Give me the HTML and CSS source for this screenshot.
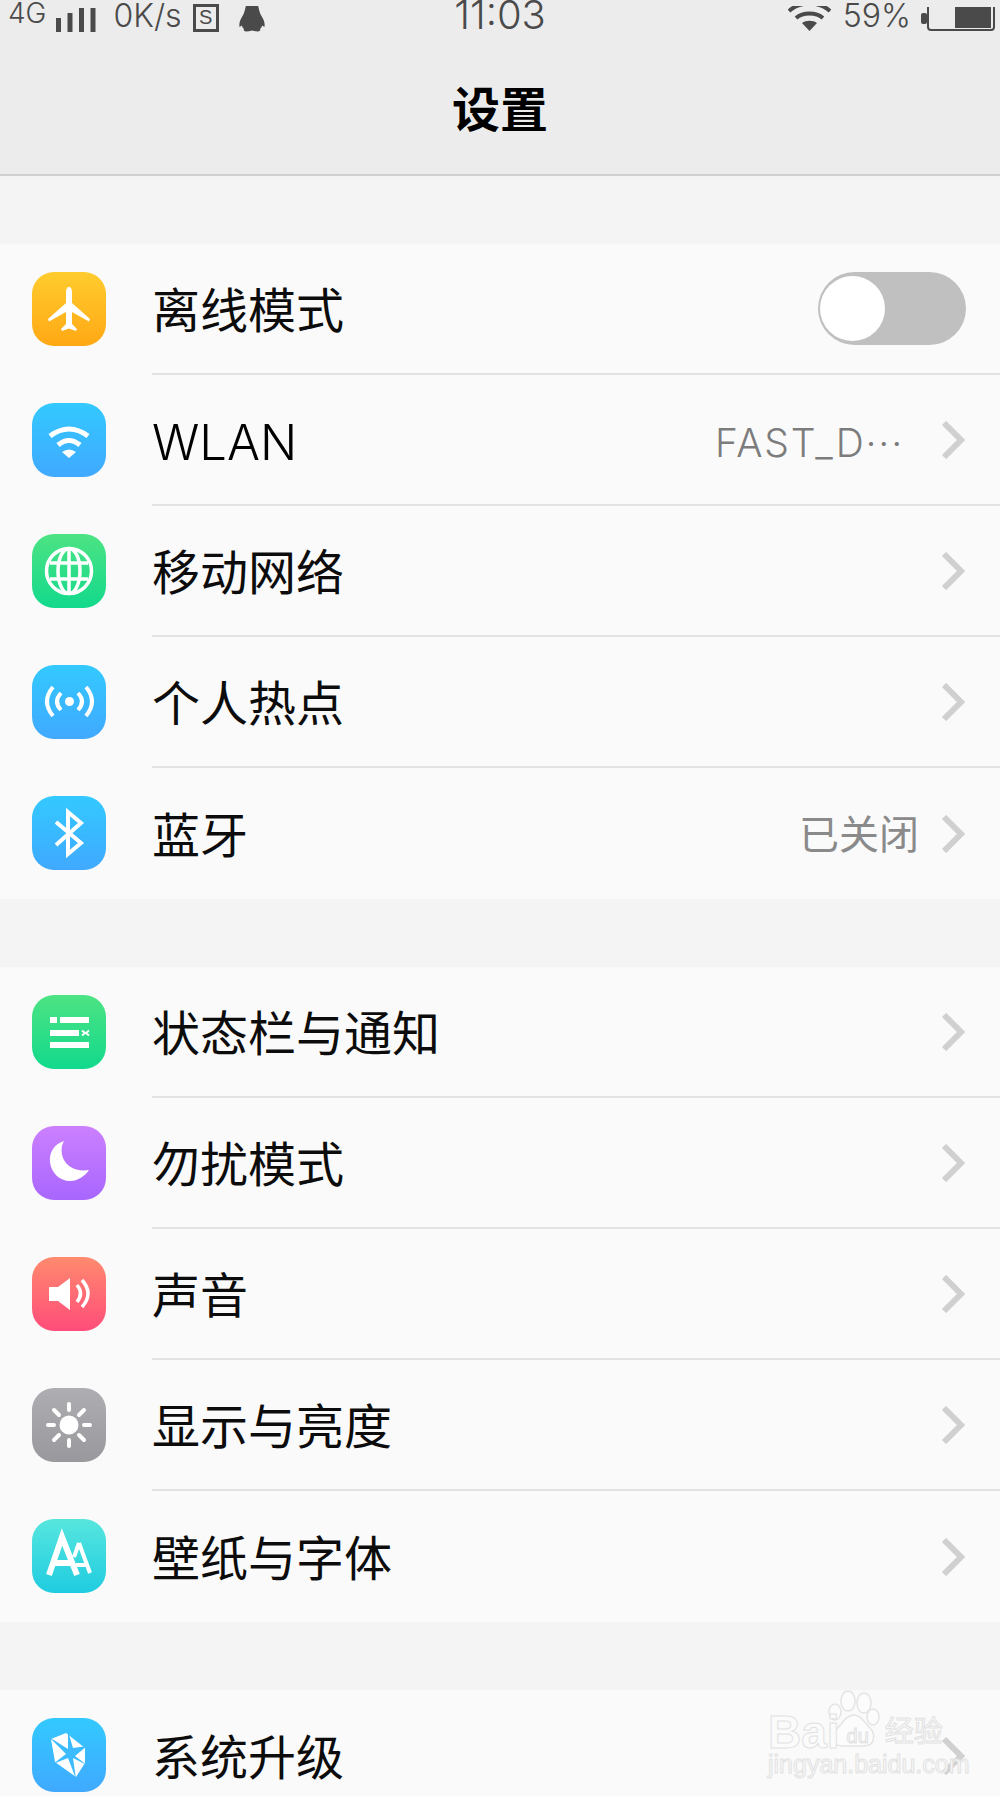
FILE: index.html
```html
<!DOCTYPE html>
<html>

<head>
    <title>设置</title>
    <link rel="stylesheet" href="styles.css">
</head>

<body>

    <div class="header">
        <div class="status">
            <div class="status-left">
                <span class="net">4G</span>
                <svg class="signal" width="40" height="24" viewBox="0 0 40 24">
                    <rect x="0" y="10" width="5" height="14" />
                    <rect x="11.500" y="5" width="5" height="19" />
                    <rect x="23" y="0" width="5" height="24" />
                    <rect x="34.500" y="0" width="5" height="24" />
                </svg>
                <span class="speed">0K/s</span>
                <span class="sim">S</span>
                <svg class="penguin" width="26" height="26" viewBox="0 0 26 26">
                    <path d="M7 -1H19C20 4 21 8 22.500 10C25 14 26 17 25.500 21L23 19.500C23 21 22 22 21 23C22 24 21 25.500 19 25.500C17 25.500 15 25 13 24.500C11 25 9 25.500 7 25.500C5 25.500 4 24 5 23C4 22 3 21 3 19.500L0.500 21C0 17 1 14 3.500 10C5 8 6 4 7 -1Z" />
                </svg>
            </div>
            <div class="time">11:03</div>
            <div class="status-right">
                <svg class="wifi-small" width="43" height="26" viewBox="0 0 43 26">
                    <path d="M1 5C12 -5 31 -5 42 5M8 12C15 6 28 6 35 12" fill="none" stroke="#4a4a4a" stroke-width="4" />
                    <path d="M14 17C18 14 25 14 29 17L21.500 25Z" />
                </svg>
                <span class="percent">59%</span>
                <svg class="battery" width="74" height="25" viewBox="0 0 74 25">
                    <rect x="0" y="6" width="6" height="11" rx="2" />
                    <rect x="7" y="-4" width="66" height="27" rx="3" fill="none" stroke="#4a4a4a" stroke-width="2" />
                    <rect x="34" y="0" width="36" height="21" />
                </svg>
            </div>
        </div>
        <div class="title">设置</div>
    </div>

    <div class="group">
        <div class="row">
            <div class="icon orange">
                <svg width="74" height="74" viewBox="0 0 74 74">
                    <path fill="#fff" d="M37 15C39 15 40 17 40 20V31L58 47L57 49.500L40 40V52L45 57L44 59L37 56.500L30 59L29 57L34 52V40L17 49.500L16 47L34 31V20C34 17 35 15 37 15Z" />
                </svg>
            </div>
            <div class="row-body">
                <span class="name">离线模式</span>
                <div class="toggle"><div class="knob"></div></div>
            </div>
        </div>
        <div class="row">
            <div class="icon blue">
                <svg width="74" height="74" viewBox="0 0 74 74">
                    <path fill="none" stroke="#fff" stroke-width="5" stroke-linejoin="round" d="M18 33Q37 19 56 33M26 42Q37 33 48 42" />
                    <path fill="#fff" d="M30 49Q37 44 44 49L37 55Z" />
                </svg>
            </div>
            <div class="row-body">
                <span class="name name-latin">WLAN</span>
                <span class="value wifi-value">FAST_D···</span>
                <svg class="arrow" width="24" height="38" viewBox="0 0 24 38"><path d="M3 2L20 19L3 36" /></svg>
            </div>
        </div>
        <div class="row">
            <div class="icon green">
                <svg width="74" height="74" viewBox="0 0 74 74" fill="none" stroke="#fff" stroke-width="3.500">
                    <circle cx="37" cy="37" r="22.500" />
                    <ellipse cx="37" cy="37" rx="11" ry="22.500" />
                    <path d="M37 15V59M18 29H56M18 45H56" />
                </svg>
            </div>
            <div class="row-body">
                <span class="name">移动网络</span>
                <svg class="arrow" width="24" height="38" viewBox="0 0 24 38"><path d="M3 2L20 19L3 36" /></svg>
            </div>
        </div>
        <div class="row">
            <div class="icon blue">
                <svg width="74" height="74" viewBox="0 0 74 74" fill="none" stroke="#fff" stroke-width="4">
                    <circle cx="37.500" cy="36.500" r="4.500" fill="#fff" stroke="none" />
                    <path d="M29 28Q21 36.500 29 45M46 28Q54 36.500 46 45M21 22Q9 36.500 21 51M54 22Q66 36.500 54 51" />
                </svg>
            </div>
            <div class="row-body">
                <span class="name">个人热点</span>
                <svg class="arrow" width="24" height="38" viewBox="0 0 24 38"><path d="M3 2L20 19L3 36" /></svg>
            </div>
        </div>
        <div class="row last">
            <div class="icon blue">
                <svg width="74" height="74" viewBox="0 0 74 74">
                    <path fill="none" stroke="#fff" stroke-width="4" d="M24 26L49 47L36 58V16L49 27L24 49" />
                </svg>
            </div>
            <div class="row-body">
                <span class="name">蓝牙</span>
                <span class="value">已关闭</span>
                <svg class="arrow" width="24" height="38" viewBox="0 0 24 38"><path d="M3 2L20 19L3 36" /></svg>
            </div>
        </div>
    </div>

    <div class="group">
        <div class="row">
            <div class="icon green">
                <svg width="74" height="74" viewBox="0 0 74 74" fill="#fff">
                    <rect x="18" y="22" width="7" height="6" />
                    <rect x="28" y="22" width="29" height="6" />
                    <rect x="18" y="35" width="29" height="6" />
                    <path d="M50 35.500L53 38L50 40.500M57 35.500L54 38L57 40.500" fill="none" stroke="#fff" stroke-width="2" />
                    <rect x="18" y="47" width="39" height="6" />
                </svg>
            </div>
            <div class="row-body">
                <span class="name">状态栏与通知</span>
                <svg class="arrow" width="24" height="38" viewBox="0 0 24 38"><path d="M3 2L20 19L3 36" /></svg>
            </div>
        </div>
        <div class="row">
            <div class="icon purple">
                <svg width="74" height="74" viewBox="0 0 74 74">
                    <path fill="#fff" d="M32 15C22 18 17 27 18 36C19 47 28 55 38 55C46 55 53 50 57 44C44 46 35 41 31 32C29 26 29 20 32 15Z" />
                </svg>
            </div>
            <div class="row-body">
                <span class="name">勿扰模式</span>
                <svg class="arrow" width="24" height="38" viewBox="0 0 24 38"><path d="M3 2L20 19L3 36" /></svg>
            </div>
        </div>
        <div class="row">
            <div class="icon red">
                <svg width="74" height="74" viewBox="0 0 74 74">
                    <path fill="#fff" d="M17 30H26L38 21V53L26 44H17Z" />
                    <path fill="none" stroke="#fff" stroke-width="3.500" d="M45 28Q52 36.500 45 45M50 23Q62 36.500 50 50" />
                </svg>
            </div>
            <div class="row-body">
                <span class="name">声音</span>
                <svg class="arrow" width="24" height="38" viewBox="0 0 24 38"><path d="M3 2L20 19L3 36" /></svg>
            </div>
        </div>
        <div class="row">
            <div class="icon gray">
                <svg width="74" height="74" viewBox="0 0 74 74" stroke="#fff" stroke-width="4" stroke-linecap="round">
                    <circle cx="37" cy="37" r="9.500" fill="#fff" stroke="none" />
                    <path d="M37 16V22M37 52V58M16 37H22M52 37H58M22 22L27 27M52 22L47 27M22 52L27 47M52 52L47 47" />
                </svg>
            </div>
            <div class="row-body">
                <span class="name">显示与亮度</span>
                <svg class="arrow" width="24" height="38" viewBox="0 0 24 38"><path d="M3 2L20 19L3 36" /></svg>
            </div>
        </div>
        <div class="row last">
            <div class="icon teal">
                <svg width="74" height="74" viewBox="0 0 74 74" fill="none" stroke="#fff">
                    <path stroke-width="4" d="M47 24L58 54M47 24L42 38M44 46H54" />
                    <path stroke-width="6" d="M17 56L30 18L45 56M22 44H40" />
                </svg>
            </div>
            <div class="row-body">
                <span class="name">壁纸与字体</span>
                <svg class="arrow" width="24" height="38" viewBox="0 0 24 38"><path d="M3 2L20 19L3 36" /></svg>
            </div>
        </div>
    </div>

    <div class="group">
        <div class="row last">
            <div class="icon blue">
                <svg width="74" height="74" viewBox="0 0 74 74">
                    <path fill="#fff" d="M19 21L34 15L53 30L53 45L44 59L23 44Z" />
                    <path fill="#3cbcff" d="M17 19L36 31L36 13L41 30L55 28L43 38L55 47L41 40L44 61L36 40L21 46L34 36Z" />
                </svg>
            </div>
            <div class="row-body">
                <span class="name">系统升级</span>
                <svg class="arrow" width="24" height="38" viewBox="0 0 24 38"><path d="M3 2L20 19L3 36" /></svg>
            </div>
        </div>
    </div>

    <div class="watermark">
        <svg class="paw" width="52" height="62" viewBox="0 0 52 62">
            <ellipse cx="20" cy="13" rx="7" ry="10" />
            <ellipse cx="36" cy="15" rx="7" ry="10" />
            <ellipse cx="7" cy="24" rx="6" ry="8" />
            <ellipse cx="45" cy="29" rx="6" ry="8" />
            <path d="M26 27C33 27 36 34 42 40C48 46 47 58 36 58C30 58 22 58 15 58C5 58 2 50 8 42C14 36 18 27 26 27Z" />
        </svg>
        <div class="mark-top">
            <span class="mark-bai">Bai</span>
            <span class="mark-du">du</span>
            <span class="mark-cn">经验</span>
        </div>
        <div class="mark-url">jingyan.baidu.com</div>
    </div>

</body>

</html>
```

FILE: styles.css
```css
html,
body {
    margin: 0;
    height: 1796px;
    overflow: hidden;
}

body {
    position: relative;
    background-color: #f4f4f4;
    font-family: Inter, "Noto Sans CJK SC", sans-serif;
}

/* top bar */

.header {
    background-color: #ececec;
    border-bottom: 2px solid #cfcfcf;
    height: 174px;
}

.status {
    display: grid;
    grid-template-columns: 1fr auto 1fr;
    align-items: end;
    height: 25px;
    color: #4a4a4a;
    fill: #4a4a4a;
}

.status-left,
.status-right {
    display: flex;
    align-items: flex-end;
    height: 25px;
}

.status-left {
    padding-left: 8px;
}

.status-right {
    justify-content: flex-end;
    padding-right: 5px;
}

.net,
.speed,
.percent {
    height: 30px;
    line-height: 30px;
    font-weight: 300;
    white-space: nowrap;
}

.net {
    font-size: 28px;
    margin-bottom: 4px;
}

.speed,
.percent {
    font-size: 32px;
    margin-bottom: 1px;
}

.signal {
    margin-left: 10px;
}

.speed {
    margin-left: 17px;
}

.sim {
    box-sizing: border-box;
    width: 26px;
    height: 28px;
    margin-left: 11px;
    border: 3px solid #4a4a4a;
    font-size: 20px;
    line-height: 20px;
    text-align: center;
    font-family: "Liberation Sans", sans-serif;
}

.penguin {
    margin-left: 20px;
}

.time {
    font-size: 40px;
    line-height: 30px;
    height: 30px;
    margin-bottom: 2px;
    font-weight: 300;
}

.percent {
    margin-left: 12px;
}

.battery {
    margin-left: 10px;
}

.title {
    height: 149px;
    padding-top: 20px;
    box-sizing: border-box;
    font-size: 48px;
    line-height: 129px;
    font-weight: 700;
    text-align: center;
    color: #000;
}

/* settings list */

.group {
    margin-top: 68px;
    background-color: #fafafa;
}

.row {
    display: flex;
    align-items: center;
    height: 131px;
}

.icon {
    flex: none;
    width: 74px;
    height: 74px;
    margin: 0 46px 2px 32px;
    border-radius: 22px;
}

.icon svg {
    display: block;
}

.orange {
    background: linear-gradient(#ffcc2e, #ffa814);
}

.blue {
    background: linear-gradient(#33c9ff, #40a9ff);
}

.green {
    background: linear-gradient(#4de383, #12d98c);
}

.purple {
    background: linear-gradient(#cc80ff, #a866ff);
}

.red {
    background: linear-gradient(#ff8a6e, #ff4d7a);
}

.gray {
    background: linear-gradient(#aeaeb2, #98989d);
}

.teal {
    background: linear-gradient(#57e6de, #1fcce0);
}

.row-body {
    flex: 1;
    display: flex;
    align-items: center;
    align-self: stretch;
    padding-right: 35px;
    border-bottom: 2px solid #e2e2e2;
}

.row.last .row-body {
    border-bottom: none;
}

.name {
    margin-right: auto;
    padding-bottom: 4px;
    font-size: 48px;
    color: #0c0c0c;
}

.name-latin {
    padding-bottom: 0;
    padding-top: 6px;
    font-size: 49px;
    font-weight: 300;
    color: #000;
}

.value {
    padding-bottom: 4px;
    font-size: 40px;
    color: #8a8a8a;
}

.wifi-value {
    margin-right: 15px;
    padding-bottom: 0;
    padding-top: 6px;
    font-size: 39px;
    font-weight: 300;
    letter-spacing: 1.800px;
    color: #7c7c7c;
}

.arrow {
    margin-left: 22px;
    fill: none;
    stroke: #d0d0d0;
    stroke-width: 6;
}

.toggle {
    box-sizing: border-box;
    width: 148px;
    height: 73px;
    margin-right: -1px;
    padding: 4px 2px;
    border-radius: 37px;
    background-color: #c0c0c0;
}

.knob {
    width: 65px;
    height: 65px;
    border-radius: 50%;
    background-color: #fff;
}

/* baidu watermark, sits over the last row */

.watermark {
    position: absolute;
    left: 768px;
    top: 1688px;
    width: 180px;
    height: 92px;
    color: #fbfbfb;
    -webkit-text-stroke: 1px #e2e2e2;
    font-family: "Liberation Sans", "Noto Sans CJK SC", sans-serif;
}

.paw {
    position: absolute;
    left: 60px;
    top: 0;
    fill: #fcfcfc;
    stroke: #e4e4e4;
    stroke-width: 1.500;
}

.mark-top {
    position: relative;
    display: flex;
    align-items: center;
    height: 62px;
    padding-top: 26px;
    box-sizing: border-box;
}

.mark-bai {
    font-size: 46px;
    font-weight: 700;
    line-height: 36px;
}

.mark-du {
    margin-left: 7px;
    font-size: 20px;
    line-height: 20px;
    margin-top: 8px;
}

.mark-cn {
    margin-left: 16px;
    font-size: 29px;
    line-height: 36px;
}

.mark-url {
    font-size: 25px;
    line-height: 28px;
    white-space: nowrap;
}
```
